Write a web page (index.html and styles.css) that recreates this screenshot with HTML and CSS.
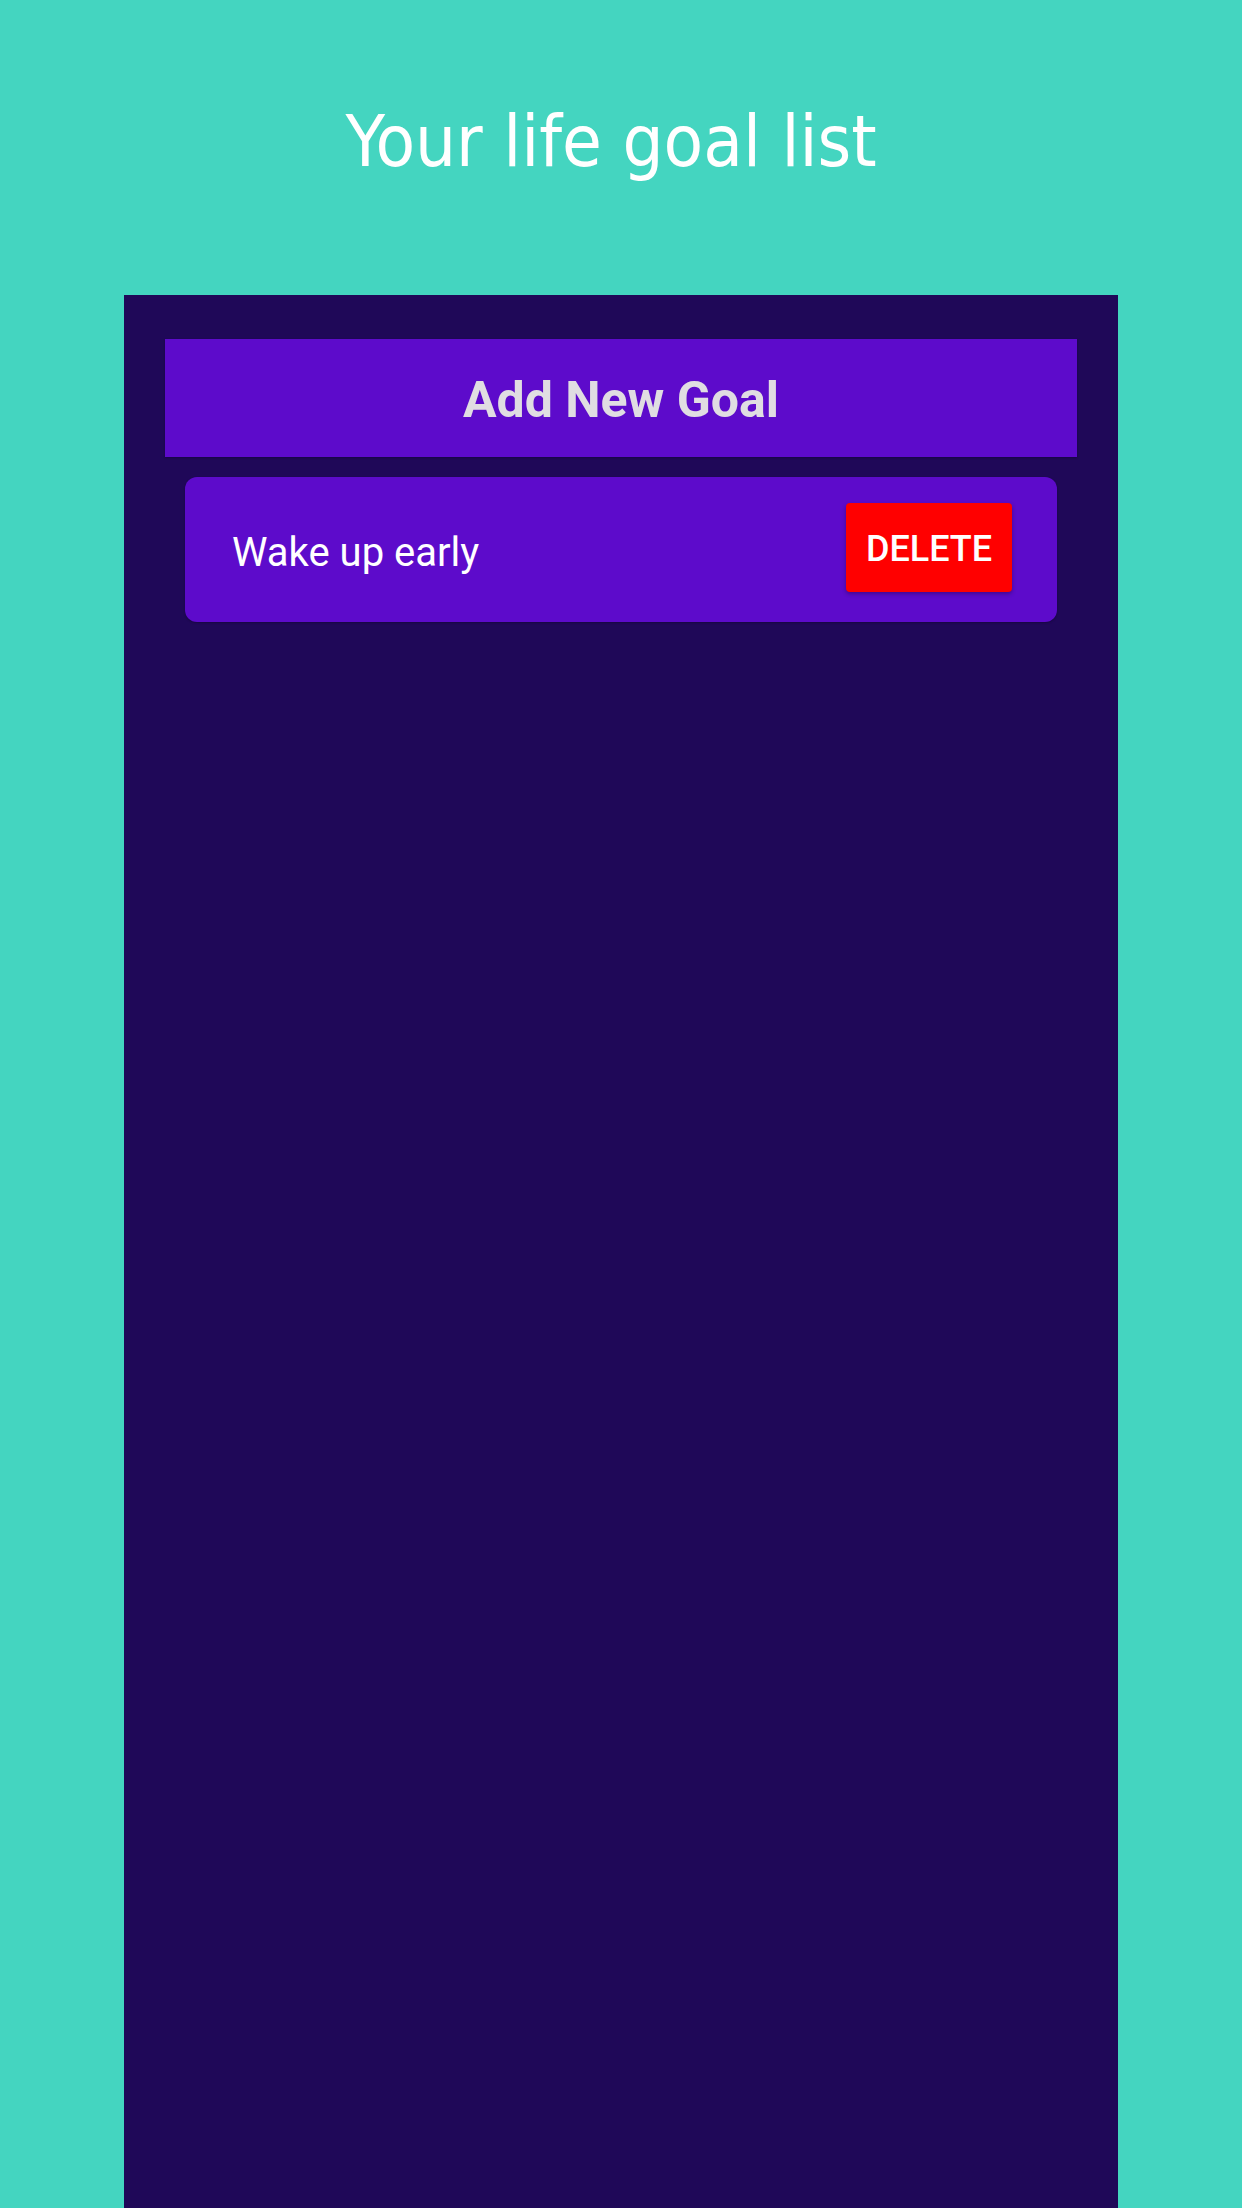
FILE: index.html
```html
<!DOCTYPE html>
<html lang="en">
<head>
<meta charset="utf-8">
<title>Your life goal list</title>
<link rel="stylesheet" href="styles.css">
</head>
<body>
<header class="header">
  <h1 class="title">Your life goal list</h1>
</header>
<main class="panel">
  <button class="add-btn">Add New Goal</button>
  <ul class="goal-list">
    <li class="goal">
      <span class="goal-text">Wake up early</span>
      <button class="delete-btn">DELETE</button>
    </li>
  </ul>
</main>
</body>
</html>
```

FILE: styles.css
```css
html, body {
  margin: 0;
  padding: 0;
}
body {
  background: #44d5c0;
  width: 1242px;
  min-height: 2208px;
  overflow: hidden;
}
.header {
  box-sizing: border-box;
  height: 295px;
  padding-top: 105px;
  padding-right: 20px;
  display: flex;
  justify-content: center;
}
.title {
  margin: 0;
  font-family: "DejaVu Sans Condensed", "DejaVu Sans", sans-serif;
  font-weight: normal;
  font-size: 72px;
  line-height: 72px;
  color: #ffffff;
  white-space: nowrap;
}
.panel {
  box-sizing: border-box;
  margin: 0 124px;
  min-height: 1913px;
  background: #1f0858;
  padding: 44px 41px 0;
  display: flex;
  flex-direction: column;
  gap: 20px;
}
.add-btn {
  height: 118px;
  border: none;
  background: #5d0bcb;
  color: #e0dde2;
  font-family: Roboto, "Noto Sans", sans-serif;
  font-weight: 700;
  font-size: 50px;
  padding: 4px 0 0;
  box-shadow: 0 1px 2px rgba(0,0,0,0.25);
}
.goal-list {
  list-style: none;
  margin: 0;
  padding: 0 20px;
}
.goal {
  box-sizing: border-box;
  height: 145px;
  background: #5d0bcb;
  border-radius: 12px;
  padding: 0 45px 0 47px;
  display: flex;
  align-items: center;
  justify-content: space-between;
  box-shadow: 0 1px 2px rgba(0,0,0,0.25);
}
.goal-text {
  font-family: Roboto, "Noto Sans", sans-serif;
  font-size: 40px;
  color: #ffffff;
  padding-top: 5px;
}
.delete-btn {
  width: 166px;
  height: 89px;
  border: none;
  border-radius: 4px;
  background: #ff0000;
  color: #ffffff;
  font-family: Roboto, "Noto Sans", sans-serif;
  font-weight: 500;
  font-size: 36px;
  padding: 2px 0 0;
  margin-top: -4px;
  box-shadow: 0 2px 4px rgba(0,0,0,0.3);
}
```
